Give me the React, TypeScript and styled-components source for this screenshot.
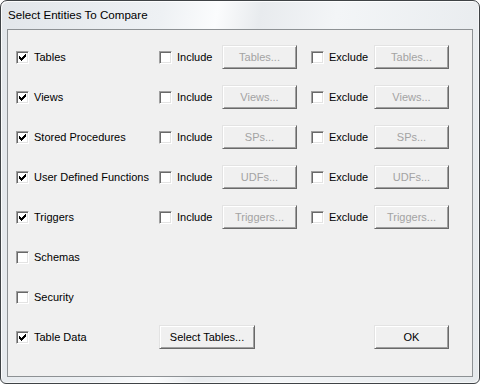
import { Fragment } from "react";
import styled, { createGlobalStyle } from "styled-components";

const GlobalStyle = createGlobalStyle`
  html, body {
    margin: 0;
    padding: 0;
    background: #ffffff;
  }
  body {
    font-family: "Liberation Sans", Arial, sans-serif;
    font-size: 11px;
  }
`;

const Window = styled.div`
  box-sizing: border-box;
  width: 480px;
  height: 384px;
  border: 1px solid #3f4346;
  border-radius: 7px 7px 6px 6px;
  box-shadow: inset 1px 1px 0 rgba(255, 255, 255, 0.85),
    inset -1px -1px 0 rgba(255, 255, 255, 0.6);
  background: linear-gradient(
    100deg,
    #e2e6ea 0%,
    #eef1f4 30%,
    #fbfcfd 40%,
    #e8ebee 48%,
    #f3f5f7 62%,
    #e5e9ec 100%
  );
  display: flex;
  flex-direction: column;
  padding: 0 6px 6px 6px;
`;

const TitleBar = styled.div`
  height: 28px;
  display: flex;
  align-items: center;
  padding-left: 1px;
  padding-bottom: 2px;
  box-sizing: border-box;
  color: #000;
  font-size: 11.6px;
`;

const Client = styled.div`
  flex: 1;
  border: 1px solid #8d9194;
  background: #f0f0f0;
  padding: 7px 0 0 8px;
  display: grid;
  grid-template-columns: 143px 63px 89px 63px 75px;
  grid-auto-rows: 40px;
  align-items: center;
`;

const Field = styled.label`
  display: flex;
  align-items: center;
  gap: 5px;
  color: #000;
  white-space: nowrap;
`;

const Box = styled.span`
  box-sizing: border-box;
  width: 13px;
  height: 13px;
  background: #fff;
  border: 1px solid;
  border-color: #a0a0a0 #ffffff #ffffff #a0a0a0;
  box-shadow: inset 1px 1px 0 #696969, inset -1px -1px 0 #e3e3e3;
  display: flex;
  align-items: center;
  justify-content: center;
  flex-shrink: 0;
`;

const Button = styled.div<{ $disabled?: boolean; $wide?: boolean }>`
  box-sizing: border-box;
  height: 24px;
  grid-column: span ${(p) => (p.$wide ? 2 : 1)};
  width: ${(p) => (p.$wide ? "96px" : "75px")};
  background: #f0f0f0;
  border: 1px solid;
  border-color: #e3e3e3 #696969 #696969 #e3e3e3;
  box-shadow: inset 1px 1px 0 #ffffff, inset -1px -1px 0 #a0a0a0;
  display: flex;
  align-items: center;
  justify-content: center;
  color: ${(p) => (p.$disabled ? "#a3a3a3" : "#000")};
  padding-bottom: 1px;
`;

const Filler = styled.div<{ $span: number }>`
  grid-column: span ${(p) => p.$span};
`;

const Check = ({ on }: { on?: boolean }) => (
  <Box>
    {on && (
      <svg width="7" height="7" viewBox="0 0 7 7">
        <path
          d="M0 2h1v1h1v1h1V3h1V2h1V1h1V0h1v3H6v1H5v1H4v1H3v1H2V6H1V5H0z"
          fill="#000"
        />
      </svg>
    )}
  </Box>
);

const rows = [
  { label: "Tables", btn: "Tables..." },
  { label: "Views", btn: "Views..." },
  { label: "Stored Procedures", btn: "SPs..." },
  { label: "User Defined Functions", btn: "UDFs..." },
  { label: "Triggers", btn: "Triggers..." },
];

const App = () => {
  return (
    <>
      <GlobalStyle />
      <Window>
        <TitleBar>Select Entities To Compare</TitleBar>
        <Client>
          {rows.map((r) => (
            <Fragment key={r.label}>
              <Field>
                <Check on />
                {r.label}
              </Field>
              <Field>
                <Check />
                Include
              </Field>
              <Button $disabled>{r.btn}</Button>
              <Field>
                <Check />
                Exclude
              </Field>
              <Button $disabled>{r.btn}</Button>
            </Fragment>
          ))}
          <Field>
            <Check />
            Schemas
          </Field>
          <Filler $span={4} />
          <Field>
            <Check />
            Security
          </Field>
          <Filler $span={4} />
          <Field>
            <Check on />
            Table Data
          </Field>
          <Button $wide>Select Tables...</Button>
          <Filler $span={1} />
          <Button>OK</Button>
        </Client>
      </Window>
    </>
  );
};

export default App;
